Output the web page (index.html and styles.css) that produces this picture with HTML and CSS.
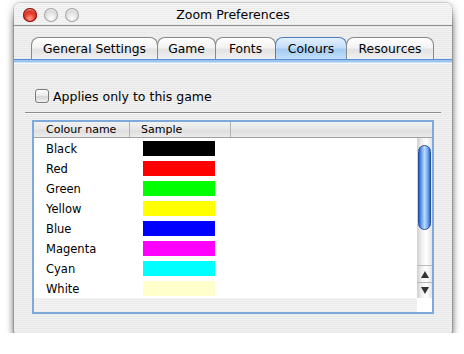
FILE: index.html
```html
<!DOCTYPE html>
<html>
<head>
<meta charset="utf-8">
<link rel="stylesheet" href="styles.css">
</head>
<body>
<div class="page">
  <div class="window">
    <div class="titlebar">
      <div class="lights">
        <span class="light red"></span>
        <span class="light grey"></span>
        <span class="light grey"></span>
      </div>
      <div class="title">Zoom Preferences</div>
      <div></div>
    </div>
    <div class="tabs">
      <div class="tab t-general">General Settings</div>
      <div class="tab t-game">Game</div>
      <div class="tab t-fonts">Fonts</div>
      <div class="tab t-colours sel">Colours</div>
      <div class="tab t-resources">Resources</div>
    </div>
    <div class="band"></div>
    <div class="content">
      <label class="check"><span class="box"></span><span>Applies only to this game</span></label>
      <div class="sep"></div>
      <div class="scrollview">
        <div class="thead">
          <div class="th c1">Colour name</div>
          <div class="th c2">Sample</div>
          <div class="th c3"></div>
        </div>
        <div class="tbody">
          <div class="rows">
            <div class="row"><span class="name">Black</span><span class="sw sw-black"></span></div>
            <div class="row"><span class="name">Red</span><span class="sw sw-red"></span></div>
            <div class="row"><span class="name">Green</span><span class="sw sw-green"></span></div>
            <div class="row"><span class="name">Yellow</span><span class="sw sw-yellow"></span></div>
            <div class="row"><span class="name">Blue</span><span class="sw sw-blue"></span></div>
            <div class="row"><span class="name">Magenta</span><span class="sw sw-magenta"></span></div>
            <div class="row"><span class="name">Cyan</span><span class="sw sw-cyan"></span></div>
            <div class="row"><span class="name">White</span><span class="sw sw-white"></span></div>
          </div>
          <div class="vscroll">
            <div class="cap"></div>
            <div class="thumb"></div>
            <div class="track"></div>
            <div class="arrow up"><span class="tri-up"></span></div>
            <div class="arrow down"><span class="tri-down"></span></div>
          </div>
        </div>
        <div class="bottom"><div class="fill"></div><div class="corner"></div></div>
      </div>
    </div>
  </div>
</div>
</body>
</html>
```

FILE: styles.css
```css
* { box-sizing: border-box; }
body {
  margin: 0;
  background: #fff;
  font-family: "Lucida Grande", "DejaVu Sans", sans-serif;
  color: #000;
}
.page { padding: 3px 0 0 14px; }
.window {
  width: 438px;
  height: 330px;
  border-radius: 6px 6px 2px 2px;
  background: repeating-linear-gradient(to bottom, #f2f2f2 0 1px, #e7e7e7 1px 2px);
  box-shadow: 0 0 0 1px rgba(0,0,0,0.12), 0 2px 9px rgba(0,0,0,0.35), 0 11px 9px -2px rgba(0,0,0,0.7);
  display: flex;
  flex-direction: column;
  overflow: hidden;
}
.titlebar {
  height: 23px;
  border-bottom: 1px solid #8f8f8f;
  display: grid;
  grid-template-columns: 1fr auto 1fr;
  align-items: center;
  background: repeating-linear-gradient(to bottom, #f6f6f6 0 1px, #ebebeb 1px 2px);
}
.lights { display: flex; gap: 7px; padding-left: 9px; padding-top: 1px; }
.light { width: 14px; height: 14px; border-radius: 50%; }
.red {
  background: radial-gradient(circle at 50% 75%, #ff9c8e 0, #e8402f 40%, #b3150c 90%);
  box-shadow: inset 0 0 0 1px #8e120b, inset 0 3px 2px -1px rgba(255,255,255,0.6);
}
.grey {
  background: radial-gradient(circle at 50% 75%, #ffffff 0, #e2e2e2 45%, #bdbdbd 95%);
  box-shadow: inset 0 0 0 1px #a6a6a6, inset 0 3px 2px -1px rgba(255,255,255,0.8);
}
.title { font-size: 12.5px; text-align: center; }
.tabs {
  display: flex;
  justify-content: center;
  margin-top: 11px;
  height: 22px;
}
.tab {
  height: 22px;
  border: 1px solid #8a8a8a;
  border-bottom: none;
  border-radius: 8px 8px 0 0;
  background: linear-gradient(#ffffff, #f3f3f3 45%, #e2e2e2 55%, #f1f1f1);
  font-size: 12.3px;
  display: flex;
  align-items: center;
  justify-content: center;
  margin-left: -1px;
  padding-top: 1px;
}
.t-general { width: 127px; }
.t-game { width: 59px; }
.t-fonts { width: 61px; }
.t-colours { width: 72px; }
.t-resources { width: 88px; }
.tab.sel {
  background: linear-gradient(#e4f1fd, #c3def8 45%, #a4cbf1 55%, #c4e0fb);
  border-color: #4f7fc0;
}
.band {
  height: 5px;
  background: linear-gradient(#5c8fd2 0 1px, #9dc4ee 1px 3px, #c9e0f7 3px 4px, #f5f8fc 4px 5px);
}
.content {
  flex: 1;
  padding: 25px 11px 0;
  display: flex;
  flex-direction: column;
}
.check {
  display: flex;
  align-items: center;
  gap: 4px;
  margin-left: 10px;
  font-size: 12.5px;
  height: 14px;
}
.box {
  width: 14px;
  height: 14px;
  border: 1px solid #7c7c7c;
  border-radius: 3px;
  background: linear-gradient(#fdfdfd, #e9e9e9 50%, #d6d6d6 55%, #f0f0f0);
}
.sep {
  margin-top: 9px;
  height: 2px;
  border-top: 1px solid #8c8c8c;
  border-bottom: 1px solid #fafafa;
}
.scrollview {
  margin: 6px 7px 0;
  border: 2px solid #7ea9db;
  height: 194px;
  display: flex;
  flex-direction: column;
  background: #fff;
}
.thead {
  display: flex;
  height: 16px;
  border-bottom: 1px solid #a0a0a0;
  background: linear-gradient(#f1f1f1, #e6e6e6 50%, #dedede 55%, #ececec);
  font-size: 11px;
}
.th {
  border-right: 1px solid #b4b4b4;
  padding-left: 12px;
  display: flex;
  align-items: center;
}
.c1 { width: 96px; }
.c2 { width: 101px; padding-left: 11px; }
.c3 { flex: 1; border-right: none; }
.tbody { display: flex; height: 160px; }
.rows { flex: 1; }
.row { display: flex; height: 20px; align-items: center; font-size: 11.5px; padding-top: 2px; }
.name { width: 96px; padding-left: 12px; }
.sw { width: 72px; height: 15px; margin-left: 13px; align-self: flex-start; margin-top: 1px; }
.sw-black { background: #000; }
.sw-red { background: #ff0000; }
.sw-green { background: #00ff00; }
.sw-yellow { background: #ffff00; }
.sw-blue { background: #0000ff; }
.sw-magenta { background: #ff00ff; }
.sw-cyan { background: #00ffff; }
.sw-white { background: #ffffcc; }
.vscroll {
  width: 15px;
  display: flex;
  flex-direction: column;
  align-items: center;
  background: linear-gradient(to right, #cfcfcf, #eeeeee 30%, #ffffff 60%, #e4e4e4);
}
.cap { height: 7px; width: 100%; }
.thumb {
  width: 13px;
  height: 85px;
  border-radius: 7px;
  border: 1px solid #27509a;
  background: linear-gradient(to right, #2a5fc4, #6ea6f0 25%, #b9d9fb 50%, #7db3f3 75%, #2f66c8);
}
.track { flex: 1; }
.arrow {
  width: 100%;
  display: flex;
  align-items: center;
  justify-content: center;
  border-top: 1px solid #b8b8b8;
}
.arrow.up { height: 17px; }
.arrow.down { height: 16px; }
.tri-up { width: 0; height: 0; border-left: 4px solid transparent; border-right: 4px solid transparent; border-bottom: 7px solid #333; }
.tri-down { width: 0; height: 0; border-left: 4px solid transparent; border-right: 4px solid transparent; border-top: 7px solid #333; }
.bottom {
  flex: 1;
  display: flex;
}
.fill { flex: 1; background: repeating-linear-gradient(to bottom, #f4f4f4 0 1px, #ebebeb 1px 2px); }
.corner { width: 15px; background: #fff; }
```
